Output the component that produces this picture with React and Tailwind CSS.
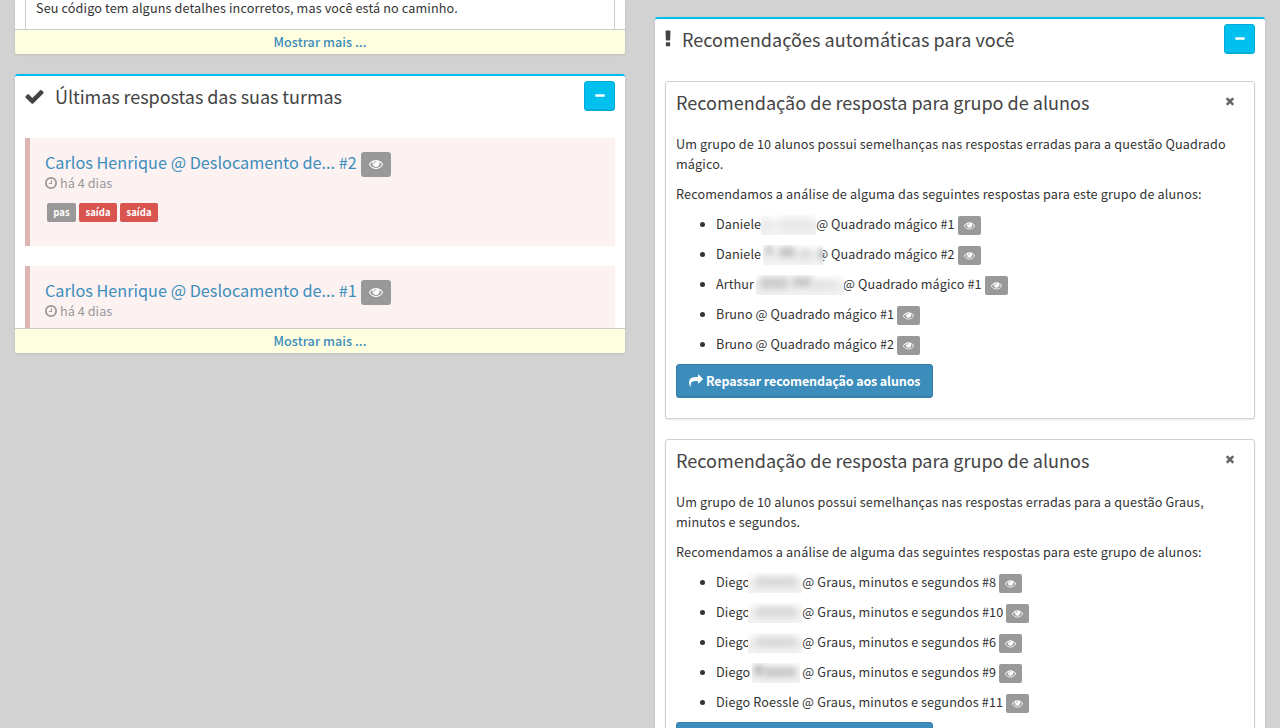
const ICONS = {
  check: "M1671 566q0 40-28 68l-724 724-136 136q-28 28-68 28t-68-28l-136-136-362-362q-28-28-28-68t28-68l136-136q28-28 68-28t68 28l294 295 656-657q28-28 68-28t68 28l136 136q28 28 28 68z",
  minus: "M1600 736v192q0 40-28 68t-68 28h-1216q-40 0-68-28t-28-68v-192q0-40 28-68t68-28h1216q40 0 68 28t28 68z",
  times: "M1490 1322q0 40-28 68l-136 136q-28 28-68 28t-68-28l-294-294-294 294q-28 28-68 28t-68-28l-136-136q-28-28-28-68t28-68l294-294-294-294q-28-28-28-68t28-68l136-136q28-28 68-28t68 28l294 294 294-294q28-28 68-28t68 28l136 136q28 28 28 68t-28 68l-294 294 294 294q28 28 28 68z",
  eye: "M1664 960q-152-236-381-353 61 104 61 225 0 185-131.5 316.5t-316.5 131.5-316.5-131.5-131.5-316.5q0-121 61-225-229 117-381 353 133 205 333.5 326.5t434.5 121.5 434.5-121.5 333.5-326.5zm-720-384q0-20-14-34t-34-14q-125 0-214.5 89.5t-89.5 214.5q0 20 14 34t34 14 34-14 14-34q0-86 61-147t147-61q20 0 34-14t14-34zm848 384q0 34-20 69-140 230-376.5 368.5t-499.5 138.5-499.5-139-376.5-368q-20-35-20-69t20-69q140-229 376.5-368t499.5-139 499.5 139 376.5 368q20 35 20 69z",
  share: "M1792 640q0 26-19 45l-512 512q-19 19-45 19t-45-19-19-45v-256h-224q-98 0-175.5 6t-154 21.5-133 42.5-105.5 69.5-80 101-48.5 138.5-17.5 181q0 55 5 123 0 6 2.5 23.5t2.5 26.5q0 15-8.5 25t-23.5 10q-16 0-28-17-7-9-13-22t-13.5-30-10.5-24q-127-285-127-451 0-199 53-333 162-403 875-403h224v-256q0-26 19-45t45-19 45 19l512 512q19 19 19 45z",
  clock: "M1024 544v448q0 14-9 23t-23 9h-320q-14 0-23-9t-9-23v-64q0-14 9-23t23-9h224v-352q0-14 9-23t23-9h64q14 0 23 9t9 23zm416 352q0-148-73-273t-198-198-273-73-273 73-198 198-73 273 73 273 198 198 273 73 273-73 198-198 73-273zm224 0q0 209-103 385.5t-279.5 279.5-385.5 103-385.5-103-279.5-279.5-103-385.5 103-385.5 279.5-279.5 385.5-103 385.5 103 279.5 279.5 103 385.5z",
  exclamation: "M1088 1248v224q0 26-19 45t-45 19h-256q-26 0-45-19t-19-45v-224q0-26 19-45t45-19h256q26 0 45 19t19 45zm30-1056l-28 768q-1 26-20.5 45t-45.5 19h-256q-26 0-45.5-19t-20.5-45l-28-768q-1-26 17.5-45t44.5-19h320q26 0 44.5 19t17.5 45z",
};

function Icon({ name, className }) {
  return (
    <svg viewBox="0 0 1792 1792" fill="currentColor" className={`shrink-0 ${className}`} aria-hidden="true">
      <path d={ICONS[name]} />
    </svg>
  );
}

function CollapseButton() {
  return (
    <button className="flex h-[30px] w-[31px] items-center justify-center rounded-[3px] border border-[#00acd6] bg-[#00c0ef] pb-px text-white shadow-[inset_0_-1px_0_rgba(0,0,0,0.09)]">
      <Icon name="minus" className="size-3" />
    </button>
  );
}

function BoxHeader({ icon, title }) {
  return (
    <div className="flex h-[62px] shrink-0 items-start justify-between px-[10px] pt-[5px]">
      <h3 className="flex h-[30px] items-center text-[18px] leading-[30px] text-[#444]">
        {icon}
        {title}
      </h3>
      <CollapseButton />
    </div>
  );
}

function ShowMore() {
  return (
    <div className="flex h-[25px] shrink-0 items-center justify-center rounded-b-[3px] border-t border-[#ccc] bg-[#ffffdf] text-[12.65px] font-medium leading-[22px] tracking-[0.05px] text-[#3c8dbc]">
      Mostrar mais ...
    </div>
  );
}

function Answer({ title, tags }) {
  return (
    <div className="mb-5 h-[108px] shrink-0 border-l-[5px] border-[#dfb5b4] bg-[#fcf2f2] pl-[15px] pt-[14px]">
      <div className="flex h-[25px] gap-1">
        <a className="text-[16.25px] leading-5 tracking-[0] text-[#3c8dbc]">{title}</a>
        <span className="flex h-[25px] w-[30px] items-center justify-center rounded-[3px] bg-[#999] pb-px text-white">
          <Icon name="eye" className="size-3.5" />
        </span>
      </div>
      <div className="-mt-1 flex h-5 items-center gap-[2px] leading-5 tracking-[0.05px] text-[#999]">
        <Icon name="clock" className="-ml-px size-3.5" />
        <span>há 4 dias</span>
      </div>
      {tags.length > 0 && (
        <div className="ml-0.5 mt-[10px] flex gap-[3px] text-[9.5px] font-bold leading-[19px] tracking-[0.05px] text-white">
          {tags.map((t, i) => (
            <span key={i} className={`h-[19px] rounded-[2px] text-center ${t === "pas" ? "w-[29px] bg-[#999]" : "w-[38px] bg-[#d9534f]"}`}>{t}</span>
          ))}
        </div>
      )}
    </div>
  );
}

function Hidden({ width, box, marks }) {
  return (
    <span className={`relative h-5 shrink-0 ${width}`}>
      <span className={`absolute top-px h-5 overflow-hidden bg-linear-to-b from-[#fdfdfd] via-[#f0f0f0] to-[#f2f2f2] ${box}`}>
        {marks.map((m, i) => (
          <span key={i} className={`absolute blur-[3px] ${m}`} />
        ))}
      </span>
    </span>
  );
}

function Suggestion({ name, hidden, rest }) {
  return (
    <li className="flex h-[30px] items-start">
      <span className="mr-[11px] mt-[8px] size-[5px] rounded-full bg-[#333]" />
      <span className="whitespace-pre">{name}</span>
      {hidden && <Hidden {...hidden} />}
      <span className="whitespace-pre">{rest}</span>
      <span className="ml-[3px] mt-[2px] flex h-[19px] w-[23px] items-center justify-center rounded-[2px] bg-[#999] pb-px text-white">
        <Icon name="eye" className="size-[11px]" />
      </span>
    </li>
  );
}

function Recommendation({ intro, items, listClass }) {
  return (
    <section className="mb-5 h-[338px] shrink-0 rounded-[3px] border border-[#d2d2d2] bg-white px-[10px] shadow-[0_1px_2px_rgba(0,0,0,0.1)]">
      <div className="flex h-[52px] justify-between">
        <h3 className="pt-[5px] text-[18.05px] leading-[30px] tracking-[0.01px] text-[#444]">Recomendação de resposta para grupo de alunos</h3>
        <Icon name="times" className="mr-[8px] mt-[12.5px] size-3 text-[#666]" />
      </div>
      <p className="leading-5">{intro[0]}<br />{intro[1]}</p>
      <p className="mt-[10px] leading-5">Recomendamos a análise de alguma das seguintes respostas para este grupo de alunos:</p>
      <ul className={`mt-[10px] pl-6 leading-5 ${listClass}`}>
        {items.map((it, i) => <Suggestion key={i} {...it} />)}
      </ul>
      <button className="flex h-[34px] w-[257px] items-center rounded-[3px] border border-[#367fa9] bg-[#3c8dbc] pl-3 text-[12.5px] font-bold tracking-[-0.12px] text-white shadow-[inset_0_-1px_0_rgba(0,0,0,0.09)]">
        <Icon name="share" className="mr-[3px] size-3.5" />
        <span className="whitespace-nowrap">Repassar recomendação aos alunos</span>
      </button>
    </section>
  );
}

const square = [
  { name: "Daniele", hidden: { width: "w-[55px]", box: "left-0 w-[55px]", marks: ["left-1 top-1 h-2.5 w-1 bg-[#e2e2e2]", "left-5 top-1 h-3 w-8 bg-[#e8e8e8]"] }, rest: "@ Quadrado mágico #1" },
  { name: "Daniele", hidden: { width: "w-[55px]", box: "left-[2px] w-[60px] z-10", marks: ["left-0.5 top-0 h-2.5 w-2 bg-[#c8c8c8]", "left-4 top-0.5 h-2.5 w-4 bg-[#c4c4c4]", "left-9 top-1 h-2.5 w-3 bg-[#ddd]", "left-[56px] top-1 h-2.5 w-2 bg-[#bbb]"] }, rest: "@ Quadrado mágico #2" },
  { name: "Arthur", hidden: { width: "w-[89px]", box: "left-[2px] w-[88px]", marks: ["left-1 top-0.5 h-3 w-7 bg-[#ccc]", "left-9 top-0.5 h-2.5 w-5 bg-[#c8c8c8]", "left-14 top-1.5 h-2 w-6 bg-[#e2e2e2]"] }, rest: "@ Quadrado mágico #1" },
  { name: "Bruno ", rest: "@ Quadrado mágico #1" },
  { name: "Bruno ", rest: "@ Quadrado mágico #2" },
];

const faint = { width: "w-[52px]", box: "-left-[2px] w-[54px]", marks: ["left-2 top-1 h-2.5 w-10 bg-[#d8d8d8]"] };
const strong = { width: "w-[52px]", box: "left-[2px] w-[48px]", marks: ["left-0.5 top-0.5 h-2.5 w-2.5 bg-[#bbb]", "left-3 top-1 h-2.5 w-8 bg-[#c8c8c8]"] };

const degrees = [
  { name: "Diego", hidden: faint, rest: "@ Graus, minutos e segundos #8" },
  { name: "Diego", hidden: faint, rest: "@ Graus, minutos e segundos #10" },
  { name: "Diego", hidden: faint, rest: "@ Graus, minutos e segundos #6" },
  { name: "Diego", hidden: strong, rest: "@ Graus, minutos e segundos #9" },
  { name: "Diego Roessle ", rest: "@ Graus, minutos e segundos #11" },
];

export default function App() {
  return (
    <div className="flex h-[728px] w-[1280px] items-start gap-[30px] overflow-hidden bg-[#d2d2d2] px-[15px] font-['Noto_Sans_CJK_JP',sans-serif] text-[12.65px] tracking-[0.13px] text-[#333]">
      <div className="flex w-[610px] shrink-0 flex-col">
        <section className="flex h-[54px] flex-col rounded-b-[3px] bg-white shadow-[0_1px_3px_rgba(0,0,0,0.1)]">
          <div className="mx-[10px] h-[29px] border-x border-[#ccc] px-[10px]">
            <p className="leading-4">Seu código tem alguns detalhes incorretos, mas você está no caminho.</p>
          </div>
          <ShowMore />
        </section>
        <section className="mt-5 flex h-[279px] flex-col rounded-[3px] border-t-2 border-[#00c0ef] bg-white shadow-[0_1px_3px_rgba(0,0,0,0.1)]">
          <BoxHeader icon={<Icon name="check" className="-ml-px mr-[10px] size-[21px]" />} title={<span className="tracking-[-0.06px]">Últimas respostas das suas turmas</span>} />
          <div className="flex h-[190px] flex-col overflow-hidden px-[10px]">
            <Answer title="Carlos Henrique @ Deslocamento de... #2" tags={["pas", "saída", "saída"]} />
            <Answer title="Carlos Henrique @ Deslocamento de... #1" tags={[]} />
          </div>
          <ShowMore />
        </section>
      </div>
      <section className="mt-[17px] flex h-[760px] w-[610px] shrink-0 flex-col rounded-[3px] border-t-2 border-[#00c0ef] bg-white shadow-[0_1px_3px_rgba(0,0,0,0.1)]">
        <BoxHeader icon={<Icon name="exclamation" className="-ml-[7px] mr-1 size-5" />} title={<span className="tracking-[0.05px]">Recomendações automáticas para você</span>} />
        <div className="flex flex-col px-[10px]">
          <Recommendation listClass="tracking-[0.08px]" intro={["Um grupo de 10 alunos possui semelhanças nas respostas erradas para a questão Quadrado", "mágico."]} items={square} />
          <Recommendation listClass="tracking-[0.13px]" intro={["Um grupo de 10 alunos possui semelhanças nas respostas erradas para a questão Graus,", "minutos e segundos."]} items={degrees} />
        </div>
      </section>
    </div>
  );
}
